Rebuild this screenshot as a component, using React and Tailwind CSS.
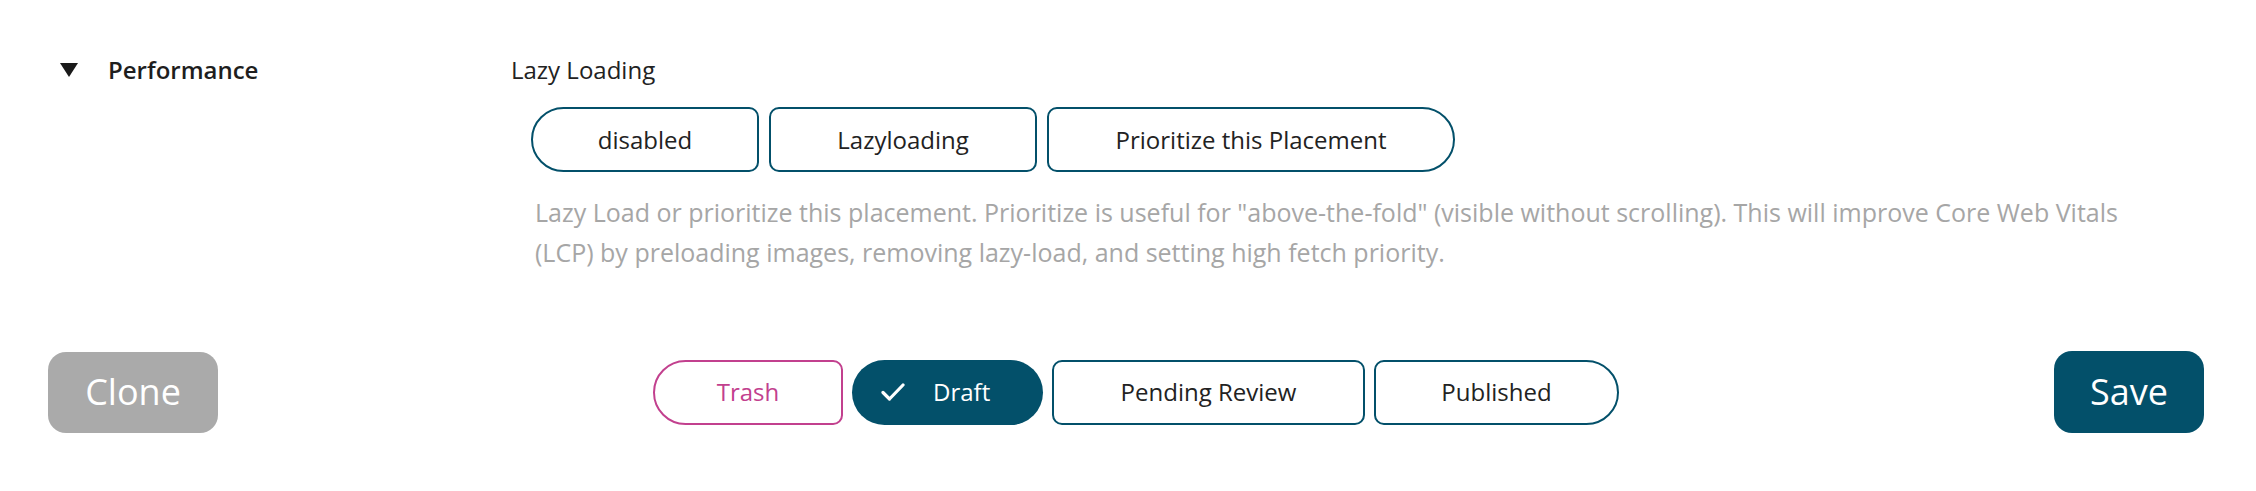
import React from 'react';

const teal = '#03506a';

const lazyOptions = [
  { label: 'disabled', width: 'w-[228px]', shape: 'rounded-l-[33px] rounded-r-[10px]' },
  { label: 'Lazyloading', width: 'w-[268px]', shape: 'rounded-[10px]' },
  { label: 'Prioritize this Placement', width: 'w-[408px]', shape: 'rounded-l-[10px] rounded-r-[33px]' },
];

const Check = () => (
  <svg width="24" height="18" viewBox="0 0 24 18" fill="none" className="shrink-0">
    <path d="M2 9.5 L8.5 16 L22 2" stroke="white" strokeWidth="3.2" strokeLinecap="round" strokeLinejoin="round" />
  </svg>
);

const App = () => {
  return (
    <div className="w-full h-[491px] bg-white text-[#222222]" style={{ fontFamily: '"Open Sans", "Noto Sans", sans-serif' }}>
      <div className="px-[48px] pt-[52px]">
        {/* settings section */}
        <div className="flex">
          <div className="w-[463px] shrink-0 flex items-center h-[36px] pl-[12px]">
            <svg width="18" height="14" viewBox="0 0 18 14" className="mr-[30px]">
              <polygon points="0,0 18,0 9,14" fill="#1a1a1a" />
            </svg>
            <span className="text-[24px] font-semibold text-[#1e1e1e] leading-[36px]">Performance</span>
          </div>
          <div className="flex-1">
            <div className="text-[24px] leading-[36px]">Lazy Loading</div>
            <div className="flex gap-[10px] pl-[20px] mt-[19px]">
              {lazyOptions.map((opt) => (
                <button
                  key={opt.label}
                  className={`${opt.width} ${opt.shape} h-[65px] border-2 border-[#03506a] bg-white text-[24px] text-[#222222] flex items-center justify-center`}
                >
                  {opt.label}
                </button>
              ))}
            </div>
            <p className="pl-[24px] mt-[20px] max-w-[1650px] text-[25px] leading-[40px] text-[#a6a6a6]">
              Lazy Load or prioritize this placement. Prioritize is useful for "above-the-fold" (visible without scrolling). This will improve Core Web Vitals (LCP) by preloading images, removing lazy-load, and setting high fetch priority.
            </p>
          </div>
        </div>

        {/* footer actions */}
        <div className="flex items-center justify-between mt-[79px] pr-[4px]">
          <button className="w-[170px] h-[81px] rounded-[18px] bg-[#aaaaaa] text-white text-[36px] flex items-center justify-center">
            Clone
          </button>
          <div className="flex gap-[9px]">
            <button className="w-[190px] h-[65px] rounded-l-[33px] rounded-r-[10px] border-2 border-[#c2408e] text-[#c2408e] text-[24px] flex items-center justify-center">
              Trash
            </button>
            <button
              className="w-[191px] h-[65px] rounded-full text-white text-[24px] flex items-center pl-[29px] gap-[28px]"
              style={{ backgroundColor: teal }}
            >
              <Check />
              Draft
            </button>
            <button className="w-[313px] h-[65px] rounded-[10px] border-2 border-[#03506a] text-[24px] flex items-center justify-center">
              Pending Review
            </button>
            <button className="w-[245px] h-[65px] rounded-l-[10px] rounded-r-[33px] border-2 border-[#03506a] text-[24px] flex items-center justify-center">
              Published
            </button>
          </div>
          <button className="w-[150px] h-[82px] rounded-[18px] bg-[#03506a] text-white text-[36px] flex items-center justify-center">
            Save
          </button>
        </div>
      </div>
    </div>
  );
};

export default App;
